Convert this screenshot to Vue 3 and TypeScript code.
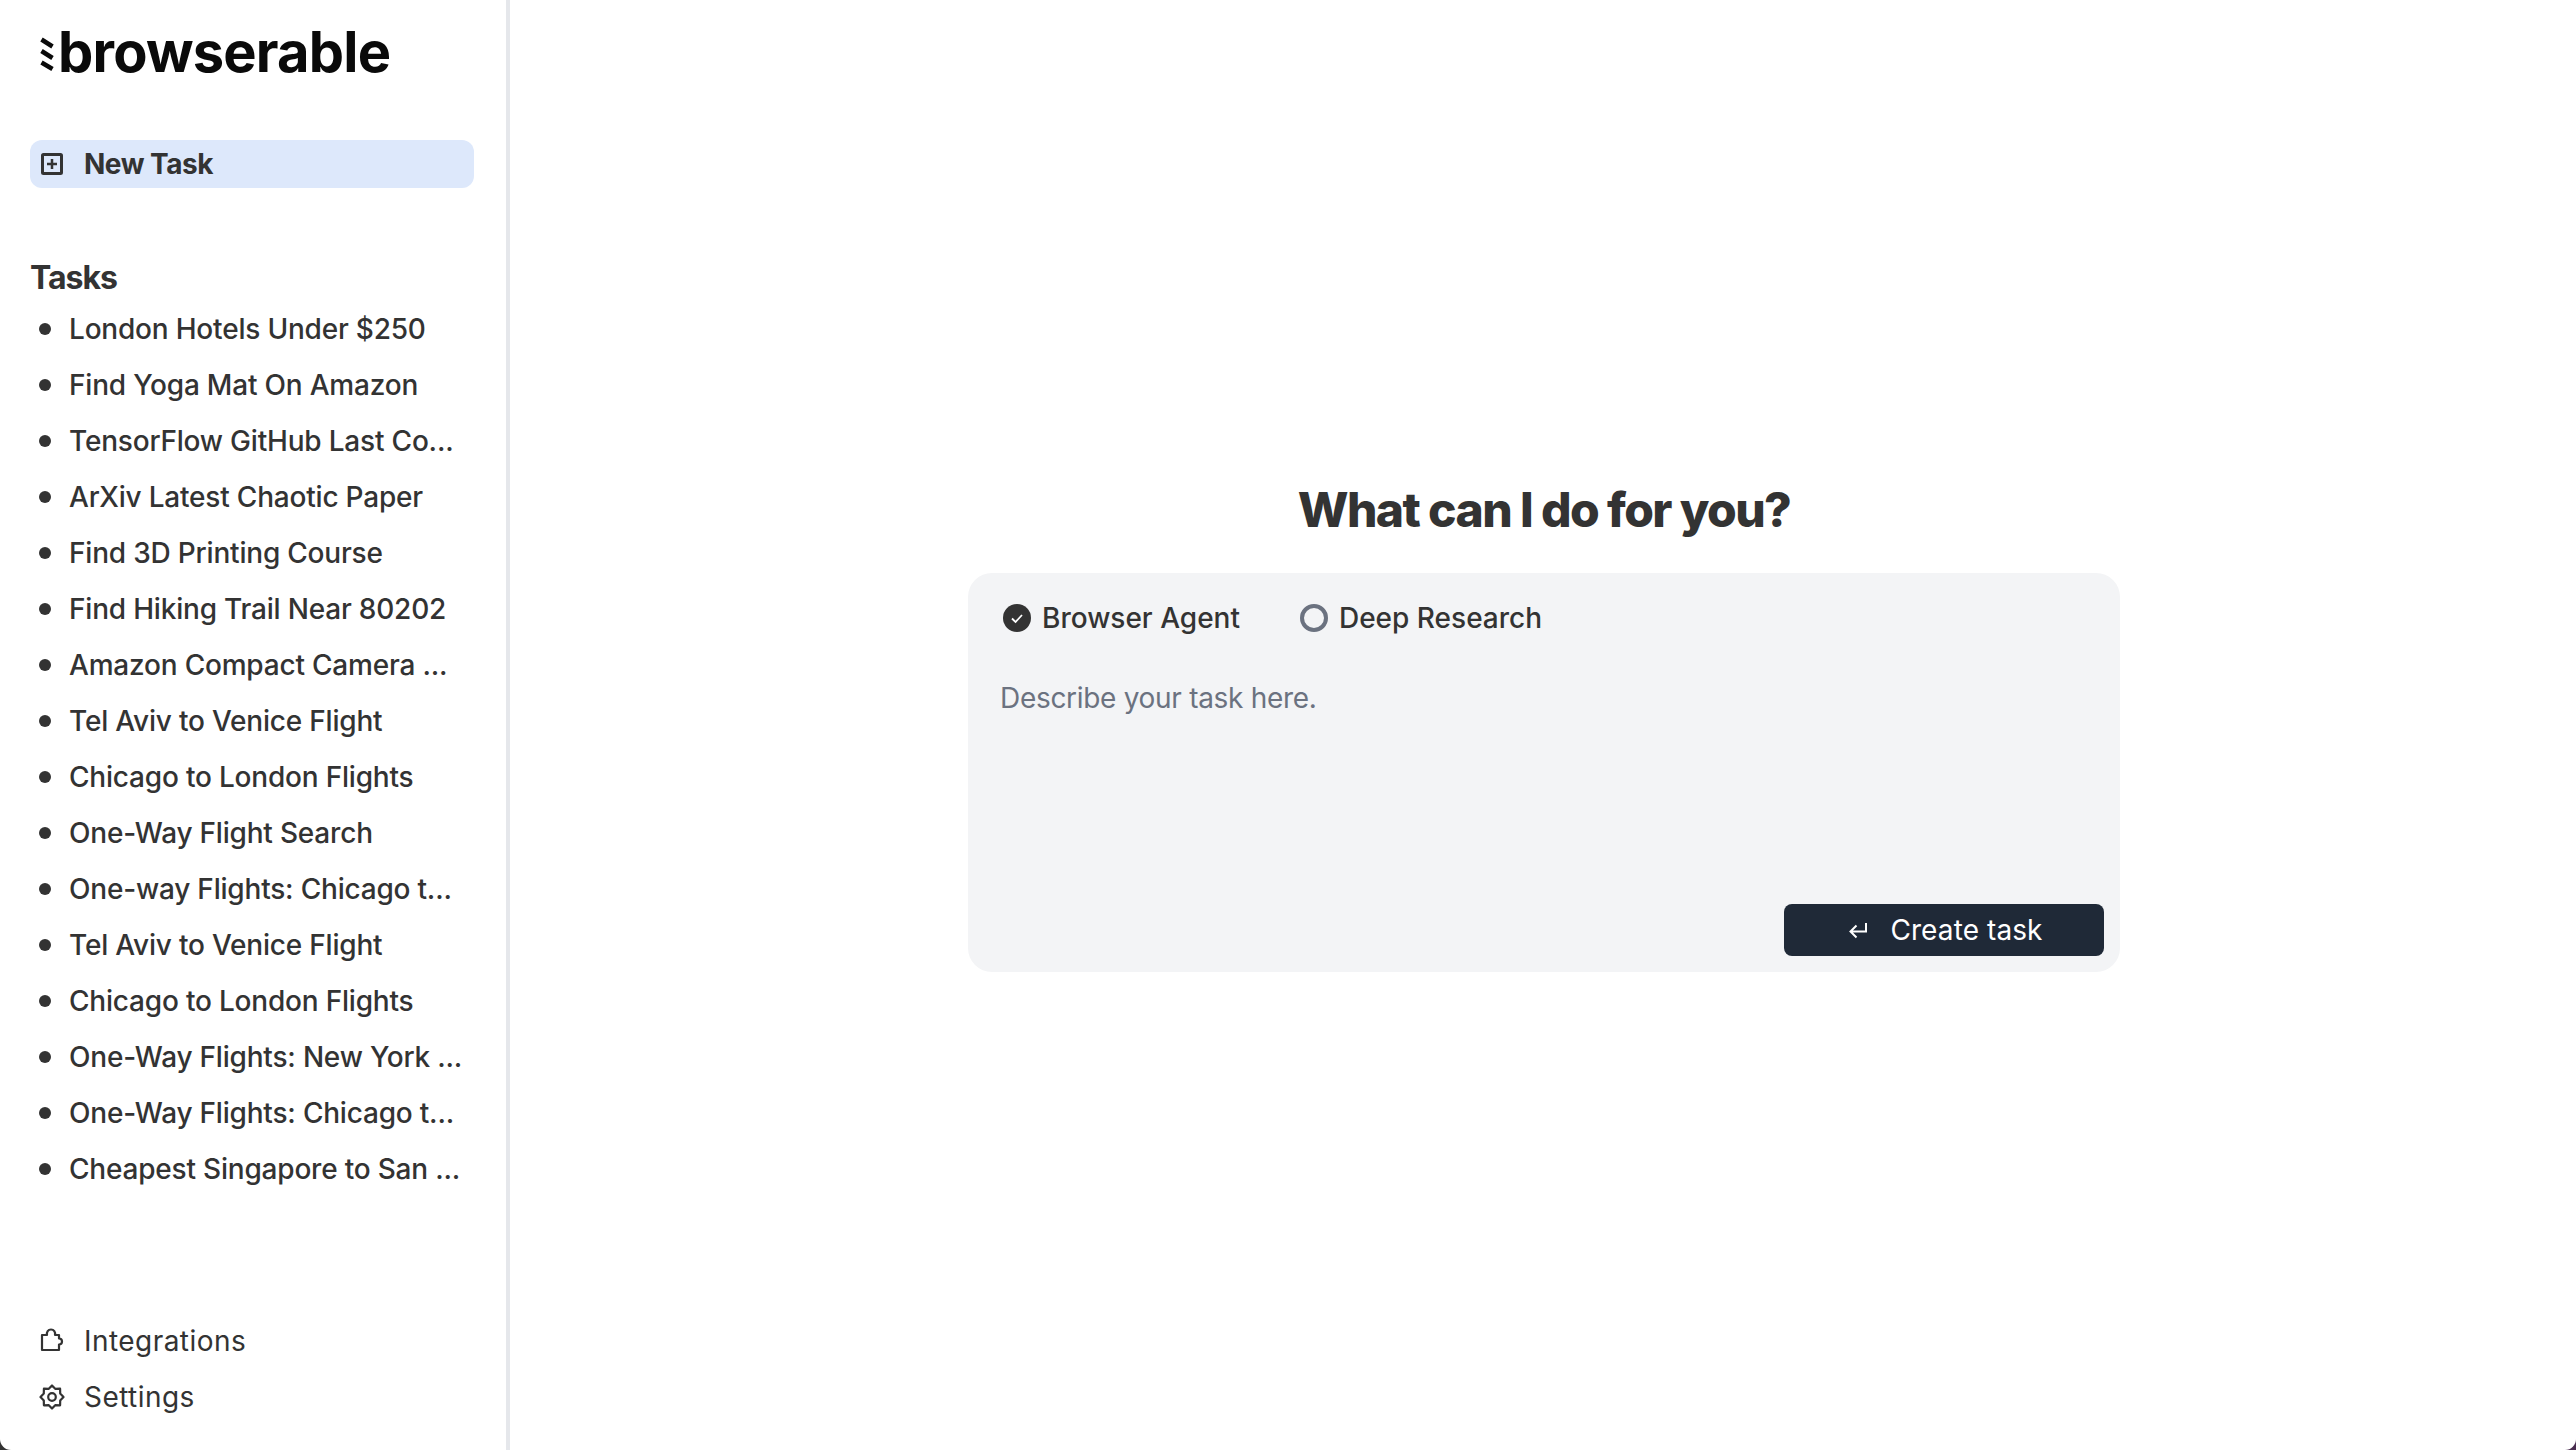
<script setup lang="ts">
const tasks: string[] = [
  'London Hotels Under $250',
  'Find Yoga Mat On Amazon',
  'TensorFlow GitHub Last Co...',
  'ArXiv Latest Chaotic Paper',
  'Find 3D Printing Course',
  'Find Hiking Trail Near 80202',
  'Amazon Compact Camera ...',
  'Tel Aviv to Venice Flight',
  'Chicago to London Flights',
  'One-Way Flight Search',
  'One-way Flights: Chicago t...',
  'Tel Aviv to Venice Flight',
  'Chicago to London Flights',
  'One-Way Flights: New York ...',
  'One-Way Flights: Chicago t...',
  'Cheapest Singapore to San ...'
]
</script>

<template>
  <div class="screen">
    <div class="window">
      <aside class="sidebar">
        <div class="logo">
          <svg class="logo-mark" viewBox="0 0 14 34" width="14" height="34">
            <path d="M1.500 2.500L12.500 9.500M1.500 14L12.500 21M1.500 25.500L12.500 32" fill="none" stroke="#0a0a0a" stroke-width="4.500" />
          </svg>
          <span>browserable</span>
        </div>

        <button class="new-task">
          <svg viewBox="0 0 22 22" width="22" height="22" fill="none" stroke="#333" stroke-width="3">
            <rect x="1.500" y="1.500" width="19" height="19" rx="1" />
            <path d="M11 6v10M6 11h10" stroke-width="2.500" />
          </svg>
          <span>New Task</span>
        </button>

        <h3 class="tasks-title">Tasks</h3>
        <ul class="task-list">
          <li v-for="(task, i) in tasks" :key="i" class="task">
            <i class="dot"></i>
            <span class="task-name">{{ task }}</span>
          </li>
        </ul>

        <nav class="bottom-nav">
          <a class="nav-item">
            <svg viewBox="0 0 26 26" width="26" height="26" fill="none" stroke="#333" stroke-width="2.200">
              <path d="M3 22V7h5c-.5-3 1-5.500 4-5.500s4.500 2.500 4 5.500h4v3.500c2 0 3 1 3 3s-1 3-3 3V22Z" stroke-linejoin="round" />
            </svg>
            <span>Integrations</span>
          </a>
          <a class="nav-item">
            <svg viewBox="0 0 26 26" width="26" height="26" fill="none" stroke="#333" stroke-width="2.200">
              <path d="M13 1.500l3.200 3.300 4.900-.1.100 4.900 3.300 3.400-3.300 3.400-.1 4.900-4.900-.1-3.200 3.300-3.200-3.300-4.900.1-.1-4.900L1.500 13l3.300-3.400.1-4.900 4.900.1Z" stroke-linejoin="round" />
              <circle cx="13" cy="13" r="3.800" />
            </svg>
            <span>Settings</span>
          </a>
        </nav>
      </aside>

      <main class="main">
        <h1 class="headline">What can I do for you?</h1>
        <div class="card">
          <div class="modes">
            <label class="mode">
              <svg viewBox="0 0 28 28" width="28" height="28">
                <circle cx="14" cy="14" r="14" fill="#333" />
                <path d="M9 14.500l3.500 3.500 6.500-7" fill="none" stroke="#fff" stroke-width="1.800" />
              </svg>
              <span>Browser Agent</span>
            </label>
            <label class="mode">
              <i class="radio"></i>
              <span>Deep Research</span>
            </label>
          </div>
          <div class="placeholder">Describe your task here.</div>
          <div class="actions">
            <button class="create">
              <svg viewBox="0 0 18 18" width="18" height="18" fill="none" stroke="#fff" stroke-width="2">
                <path d="M17 2v8.500H2M7.500 4.500l-6 6 6 6" />
              </svg>
              <span>Create task</span>
            </button>
          </div>
        </div>
      </main>
    </div>
  </div>
</template>

<style>
html,
body {
  margin: 0;
  background: #2b2b2b;
}
</style>

<style scoped>
.screen {
  width: 2576px;
  height: 1450px;
  background: linear-gradient(90deg, #333 50%, #4a2d50 50%);
  font-family: Inter, "Open Sans", sans-serif;
  color: #333;
}

.window {
  display: flex;
  height: 100%;
  background: #fff;
  border-radius: 0 0 11px 11px;
  overflow: hidden;
}

.sidebar {
  box-sizing: border-box;
  border-right: 4px solid #e5e7eb;
  flex: 0 0 510px;
  padding: 0 30px;
  display: flex;
  flex-direction: column;
}

.logo {
  display: flex;
  align-items: center;
  gap: 4px;
  height: 104px;
  padding-left: 10px;
  font-size: 56px;
  font-weight: 700;
  color: #0a0a0a;
  letter-spacing: -0.8px;
}

.logo-mark {
  margin-top: 3px;
}

.new-task {
  display: flex;
  align-items: center;
  gap: 21px;
  width: 444px;
  height: 48px;
  margin-top: 36px;
  padding: 0 11px;
  border: 0;
  border-radius: 12px;
  background: #dde8fb;
  font: 700 28px Inter, sans-serif;
  letter-spacing: -0.5px;
  color: #333;
}

.tasks-title {
  margin: 71px 0 0;
  font-size: 32px;
  font-weight: 700;
  letter-spacing: -1px;
  line-height: 38px;
}

.task-list {
  list-style: none;
  margin: 4px 0 0;
  padding: 0;
}

.task {
  display: flex;
  align-items: center;
  height: 56px;
  padding-left: 9px;
  font-size: 28px;
  font-weight: 500;
  letter-spacing: -0.2px;
}

.dot {
  width: 12px;
  height: 12px;
  border-radius: 50%;
  background: #333;
  flex: none;
  margin-right: 18px;
}

.task-name {
  white-space: nowrap;
}

.bottom-nav {
  margin-top: auto;
  padding-bottom: 25px;
}

.nav-item {
  display: flex;
  align-items: center;
  gap: 19px;
  height: 56px;
  padding-left: 9px;
  font-size: 28px;
  letter-spacing: 0.45px;
}

.main {
  flex: 1;
  box-sizing: border-box;
  padding: 480px 0 0 2px;
  display: flex;
  flex-direction: column;
  align-items: center;
}

.headline {
  margin: 0;
  font-size: 48px;
  line-height: 60px;
  font-weight: 800;
  letter-spacing: -1.6px;
}

.card {
  box-sizing: border-box;
  width: 1152px;
  height: 399px;
  margin-top: 33px;
  padding: 28px 16px 16px 33px;
  background: #f3f4f6;
  border-radius: 24px;
  display: flex;
  flex-direction: column;
}

.modes {
  display: flex;
  gap: 60px;
  padding-left: 2px;
}

.mode {
  display: flex;
  align-items: center;
  gap: 11px;
  font-size: 28px;
  font-weight: 500;
}

.radio {
  box-sizing: border-box;
  width: 28px;
  height: 28px;
  border-radius: 50%;
  border: 4px solid #6b7280;
}

.placeholder {
  margin: 46px 0 0 -1px;
  font-size: 28px;
  letter-spacing: -0.3px;
  color: #6b7280;
}

.actions {
  margin-top: auto;
  display: flex;
  justify-content: flex-end;
}

.create {
  display: flex;
  align-items: center;
  justify-content: center;
  gap: 23px;
  width: 320px;
  height: 52px;
  padding: 0 0 0 4px;
  border: 0;
  border-radius: 8px;
  background: #1f2937;
  color: #fff;
  font: 400 28px Inter, sans-serif;
  letter-spacing: 0.1px;
}
</style>
